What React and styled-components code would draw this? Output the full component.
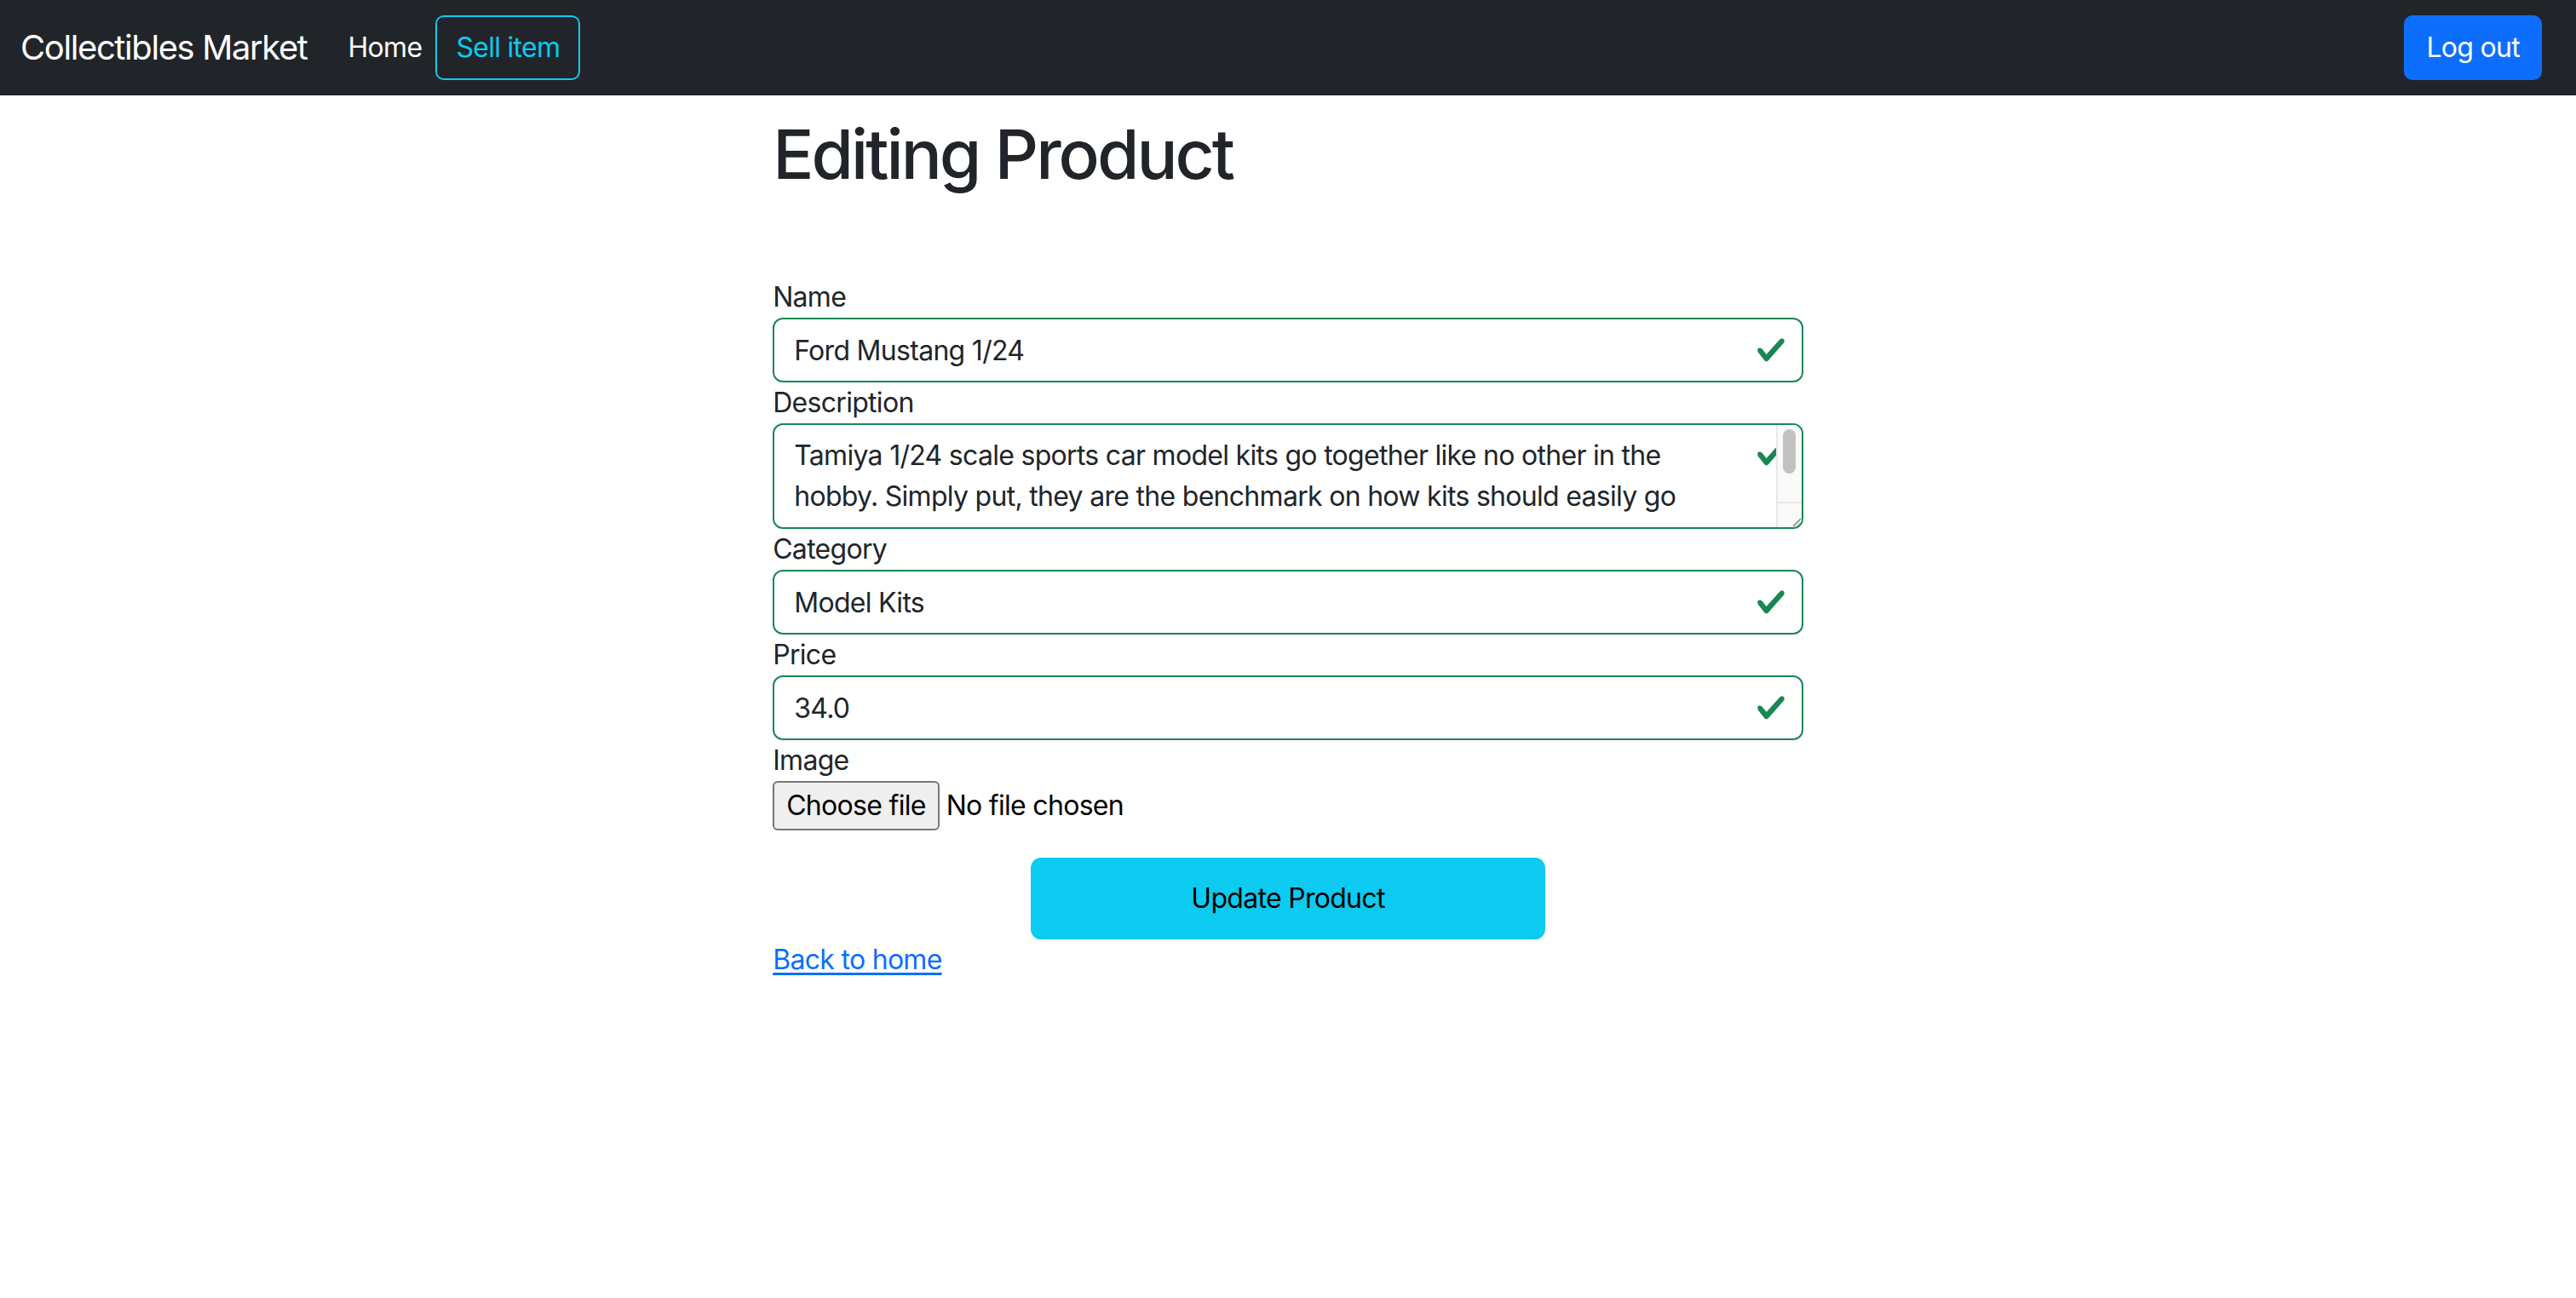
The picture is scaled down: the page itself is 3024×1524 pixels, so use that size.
import React from "react";
import styled, { createGlobalStyle } from "styled-components";

const GlobalStyle = createGlobalStyle`
  *, *::before, *::after { box-sizing: border-box; }
  body {
    margin: 0;
    font-family: Inter, "Noto Sans", "Liberation Sans", sans-serif;
    font-size: 32px;
    line-height: 1.5;
    letter-spacing: -0.022em;
    color: #212529;
    background: #fff;
  }
`;

const description =
  "Tamiya 1/24 scale sports car model kits go together like no other in the hobby. Simply put, they are the benchmark on how kits should easily go together. Each kit features a detailed body, chassis and interior, with clear instructions and crisp parts that make building a real pleasure.";

const CheckIcon = () => (
  <svg viewBox="0 0 8 8" width="36" height="36">
    <path
      fill="#198754"
      d="M2.3 6.73.6 4.53c-.4-1.04.46-1.4 1.1-.8l1.1 1.4 3.4-3.8c.6-.63 1.6-.27 1.2.7l-4 4.6c-.43.5-.8.4-1.1.1z"
    />
  </svg>
);

const ResizeGrip = () => (
  <svg viewBox="0 0 14 14" width="14" height="14">
    <path d="M13 4 L4 13 M13 9 L9 13" stroke="#777" strokeWidth="1.4" />
  </svg>
);

const App = () => {
  return (
    <>
      <GlobalStyle />
      <Navbar>
        <Brand href="#">Collectibles Market</Brand>
        <NavLink href="#">Home</NavLink>
        <OutlineButton>Sell item</OutlineButton>
        <LogoutButton>Log out</LogoutButton>
      </Navbar>

      <Page>
        <Title>Editing Product</Title>
        <Form onSubmit={(e) => e.preventDefault()}>
          <Label htmlFor="name">Name</Label>
          <Field>
            <Input id="name" defaultValue="Ford Mustang 1/24" />
            <Valid><CheckIcon /></Valid>
          </Field>

          <Label htmlFor="description">Description</Label>
          <Field $multi>
            <TextArea id="description" rows={2} defaultValue={description} />
            <Valid $top><CheckIcon /></Valid>
            <Scrollbar>
              <Thumb />
              <Corner><ResizeGrip /></Corner>
            </Scrollbar>
          </Field>

          <Label htmlFor="category">Category</Label>
          <Field>
            <Input id="category" defaultValue="Model Kits" />
            <Valid><CheckIcon /></Valid>
          </Field>

          <Label htmlFor="price">Price</Label>
          <Field>
            <Input id="price" defaultValue="34.0" />
            <Valid><CheckIcon /></Valid>
          </Field>

          <Label htmlFor="image">Image</Label>
          <FileRow>
            <FileButton htmlFor="image">Choose file</FileButton>
            <HiddenFile id="image" type="file" />
            <span>No file chosen</span>
          </FileRow>

          <SubmitButton type="submit">Update Product</SubmitButton>
        </Form>
        <BackLink href="#">Back to home</BackLink>
      </Page>
    </>
  );
};

const Navbar = styled.nav`
  display: flex;
  align-items: center;
  height: 112px;
  padding: 0 40px 0 24px;
  background-color: #212529;
`;

const Brand = styled.a`
  margin-right: 32px;
  font-size: 40px;
  letter-spacing: -0.035em;
  color: #fff;
  text-decoration: none;
  white-space: nowrap;
`;

const NavLink = styled.a`
  padding: 0 16px;
  color: #fff;
  text-decoration: none;
`;

const OutlineButton = styled.button`
  height: 76px;
  padding: 0 22px;
  font: inherit;
  letter-spacing: inherit;
  color: #0dcaf0;
  background: transparent;
  border: 2px solid #0dcaf0;
  border-radius: 10px;
`;

const LogoutButton = styled.button`
  margin-left: auto;
  height: 76px;
  padding: 0 24px;
  font: inherit;
  letter-spacing: inherit;
  color: #fff;
  background: #0d6efd;
  border: 2px solid #0d6efd;
  border-radius: 10px;
`;

const Page = styled.main`
  width: 40%;
  margin: 0 auto;
`;

const Title = styled.h1`
  margin: 21px 0 0;
  font-size: 80px;
  font-weight: 500;
  line-height: 1.2;
  letter-spacing: -0.037em;
`;

const Form = styled.form`
  display: flex;
  flex-direction: column;
  margin-top: 96px;
`;

const Label = styled.label`
  display: block;
`;

const Field = styled.div`
  position: relative;
  height: ${(p) => (p.$multi ? "124px" : "76px")};
  padding: ${(p) => (p.$multi ? "12px 90px 12px 23px" : "0 72px 0 23px")};
  border: 2px solid #198754;
  border-radius: 12px;
  background: #fff;
  overflow: hidden;
`;

const Valid = styled.span`
  position: absolute;
  right: 18px;
  top: ${(p) => (p.$top ? "16px" : "50%")};
  transform: ${(p) => (p.$top ? "none" : "translateY(-50%)")};
  display: flex;
`;

const Input = styled.input`
  display: block;
  width: 100%;
  height: 100%;
  padding: 0;
  font: inherit;
  letter-spacing: inherit;
  color: #212529;
  background: transparent;
  border: none;
  outline: none;
`;

const TextArea = styled.textarea`
  display: block;
  width: 100%;
  height: 96px;
  padding: 0;
  font: inherit;
  line-height: 1.5;
  letter-spacing: inherit;
  color: #212529;
  background: transparent;
  border: none;
  outline: none;
  resize: none;
  overflow: hidden;
`;

const Scrollbar = styled.div`
  position: absolute;
  top: 0;
  right: 0;
  bottom: 0;
  width: 30px;
  display: flex;
  flex-direction: column;
  background: #fafafa;
  border-left: 2px solid #e8e8e8;
`;

const Thumb = styled.div`
  width: 15px;
  height: 52px;
  margin: 5px 0 0 6px;
  border-radius: 8px;
  background: #c1c1c1;
`;

const Corner = styled.div`
  margin-top: auto;
  height: 30px;
  display: flex;
  align-items: flex-end;
  justify-content: flex-end;
  border-top: 2px solid #e8e8e8;
`;

const FileRow = styled.div`
  display: flex;
  align-items: center;
  gap: 8px;
  height: 58px;
  color: #000;
`;

const FileButton = styled.label`
  display: flex;
  align-items: center;
  height: 58px;
  padding: 0 14px;
  color: #000;
  background: #efefef;
  border: 2px solid #767676;
  border-radius: 6px;
`;

const HiddenFile = styled.input`
  display: none;
`;

const SubmitButton = styled.button`
  align-self: center;
  width: 50%;
  height: 96px;
  margin-top: 32px;
  font: inherit;
  letter-spacing: inherit;
  color: #000;
  background: #0dcaf0;
  border: 2px solid #0dcaf0;
  border-radius: 12px;
`;

const BackLink = styled.a`
  align-self: flex-start;
  color: #0d6efd;
  text-decoration: underline;
  text-underline-offset: 4px;
`;

export default App;
